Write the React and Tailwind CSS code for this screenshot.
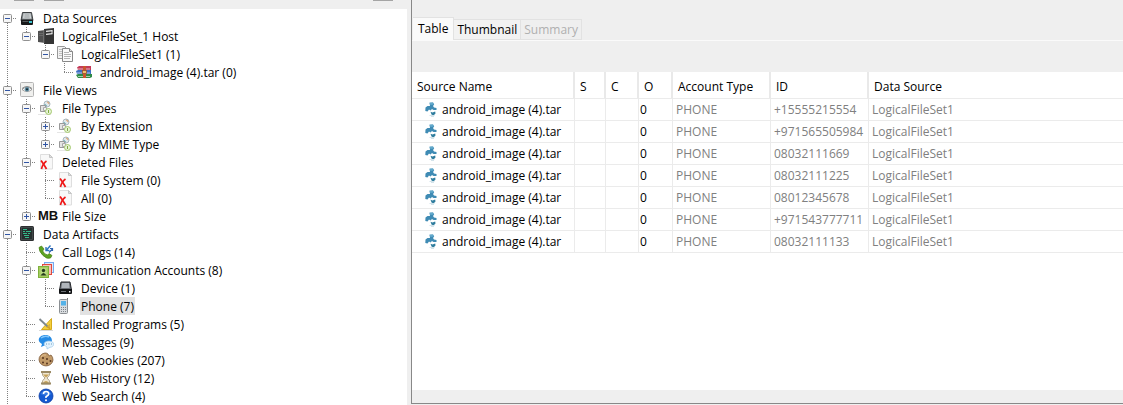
import { useState } from "react";

const ICONS = {
  drive: (
    <>
      <path d="M3.5 2.500h9l1.500 8H2z" fill="#8d9396" stroke="#3c3f41" />
      <path d="M4.500 3.500h7l.6 5H4z" fill="#d5d9da" />
      <path d="M5.500 5h5M5.300 7h5.400" stroke="#777c7f" strokeWidth=".7" />
      <path d="M2 9.500h12v4.500a1 1 0 0 1-1 1H3a1 1 0 0 1-1-1z" fill="#17191a" />
      <path d="M3.500 11.500h6" stroke="#55595b" />
      <rect x="10" y="11" width="3" height="2" fill="#3fc3cf" />
    </>
  ),
  device: (
    <>
      <path d="M4 2h9l1.500 8H2.500z" fill="#6a6e75" stroke="#25272b" />
      <path d="M5 3h7l.6 5H4.400z" fill="#b0b5bb" />
      <path d="M2 9h13v4a1 1 0 0 1-1 1H3a1 1 0 0 1-1-1z" fill="#111214" />
      <path d="M4 11.500h5" stroke="#6b6f74" />
      <rect x="12" y="11" width="1.500" height="1.500" fill="#e8eaec" />
    </>
  ),
  host: (
    <>
      <path d="M0 3l7-1v13l-7-1z" fill="#505050" />
      <path d="M1 5.500h4M1 7.500h4" stroke="#707070" strokeWidth=".8" />
      <path d="M6 1l10-1v16H6z" fill="#353535" />
      <path d="M5.800 2v13" stroke="#999" strokeWidth=".6" />
      <path d="M8 3.300l6.500-.6M8 6.300l6.500-.6" stroke="#ececec" strokeWidth="1.200" />
      <path d="M14 2.500v3" stroke="#ececec" />
    </>
  ),
  fileset: (
    <>
      <path d="M.5.5h7l2 2v10h-9z" fill="#f2f2f2" stroke="#999" />
      <path d="M2 3.500h4M2 5.500h4M2 7.500h3M2 9.500h3" stroke="#b3b3b3" strokeWidth=".8" />
      <path d="M5.500 2.500h7l3 3v10h-10z" fill="#fafafa" stroke="#888" />
      <path d="M12.500 2.500v3h3" fill="#ddd" stroke="#888" />
      <path d="M7 6.500h5M7 8.500h7M7 10.500h7M7 12.500h6" stroke="#aaa" strokeWidth=".9" />
    </>
  ),
  archive: (
    <>
      <path d="M1 3.500L3 2h12v4H2z" fill="#c43a58" />
      <path d="M1 5h13" stroke="#ecd3d8" strokeWidth=".8" />
      <path d="M0 7l2-1h13v4H1z" fill="#3f6fc4" />
      <path d="M1 9h13" stroke="#cfdcf2" strokeWidth=".8" />
      <path d="M0 11l2-1h14v3l-2 1H2z" fill="#2f8a47" />
      <path d="M2 12.500h12" stroke="#c4e5ca" strokeWidth=".8" />
      <path d="M7 2h3v12H7z" fill="#c9552f" />
      <rect x="6.500" y="6.500" width="4" height="3" fill="#efc46a" stroke="#9a5030" strokeWidth=".8" />
    </>
  ),
  views: (
    <>
      <rect x="1.500" y=".5" width="13" height="14" rx="1" fill="#f0f0ee" stroke="#b5b5b5" />
      <path d="M3 7.500Q8 3 13 7.500Q8 11.500 3 7.500" fill="#fff" stroke="#888" strokeWidth=".8" />
      <path d="M3 6.500Q8 2.500 13 6.500" fill="none" stroke="#888" />
      <circle cx="8" cy="7.300" r="2.300" fill="#5f8ea3" />
      <circle cx="8" cy="7.300" r="1.100" fill="#172a35" />
    </>
  ),
  types: (
    <>
      <path d="M0 14.500h13" stroke="#e5e5e5" />
      <circle cx="9" cy="4" r="3" fill="#e2e7e9" stroke="#a9b8bf" />
      <path d="M9 2a2 2 0 0 1 2 2" fill="none" stroke="#db9c65" />
      <path d="M7 4a2 2 0 0 0 2 2" fill="none" stroke="#59a8b4" />
      <path d="M2.500 5.500h5v6h-5z" fill="#e4e4e4" stroke="#999" />
      <path d="M5.500 7.500v3h3v-3z" fill="#f1f1f1" stroke="#aaa" />
      <circle cx="10.500" cy="11.500" r="3" fill="#e6f2d6" stroke="#a5ca70" />
      <path d="M10.500 10v3" stroke="#80ad42" />
    </>
  ),
  deleted: (
    <>
      <path d="M2.500.5h9l3 3v11.500H2.500z" fill="#f8f8f8" stroke="#dedede" />
      <path d="M11.500.5v3h3z" fill="#e1e1e1" stroke="#c5c5c5" />
      <path d="M3 6.500Q5 9 8.500 15" fill="none" stroke="#ee1515" strokeWidth="1.800" />
      <path d="M8.500 7Q4.500 10 3.500 15" fill="none" stroke="#ee1515" strokeWidth="1.600" />
    </>
  ),
  artifacts: (
    <>
      <rect x="1" y="0" width="14" height="15" rx="1.500" fill="#2d2f31" />
      <rect x="2.500" y="1.500" width="11" height="12" fill="#26302f" stroke="#4d5355" strokeWidth=".7" />
      <path d="M4 3.500h4M4 5.500h2M7 5.500h5M4 7.500h4M9 7.500h2M5 9.500h5M6 11.500h4" stroke="#36b98b" />
    </>
  ),
  calls: (
    <>
      <path d="M1 3.500L3.500 2L6 5L4.700 7Q6 10 9.500 11L11 9.500L14 11.500L12.500 14Q9 15.500 5 11.500T1 3.500" fill="#5da321" stroke="#427d12" strokeWidth=".7" />
      <path d="M12.500 1.500L8.500 6M8 3v3.500h3.500" fill="none" stroke="#2d75bd" strokeWidth="1.400" />
      <path d="M11 8.500L14.500 5M12 4.500h2.500V7" fill="none" stroke="#2a62b0" strokeWidth="1.200" />
    </>
  ),
  accounts: (
    <>
      <rect x="6.500" y=".5" width="9" height="10" fill="#dcecfc" stroke="#76aaf0" />
      <rect x="4.500" y="2.500" width="9" height="10" fill="#fbc4bd" stroke="#e2493d" />
      <rect x=".5" y="4.500" width="10" height="11" fill="#a5cd60" stroke="#7fb13c" />
      <rect x="2.500" y="6" width="6" height="7.500" fill="#b7d97f" />
      <circle cx="5.500" cy="8.500" r="1.700" fill="#243b1c" />
      <path d="M2.500 13.500q3-5 6 0z" fill="#243b1c" />
    </>
  ),
  phone: (
    <>
      <path d="M10.500 0v3" stroke="#777" />
      <rect x="2.500" y="1.500" width="8" height="14" rx="1" fill="#d9dcdf" stroke="#8b8f93" />
      <rect x="4" y="3" width="5" height="4.500" fill="#54b2e8" />
      <path d="M4 9.500h5M4 11.500h5M4 13.500h5" stroke="#7d848a" strokeDasharray="1 1" />
    </>
  ),
  programs: (
    <>
      <path d="M13.500 2.500v11H3.500z" fill="#f4cf3c" stroke="#d6ab1c" />
      <path d="M11.500 8.500v3H9z" fill="#fff" stroke="#c89d14" strokeWidth=".7" />
      <path d="M1.500 3l8 7.500" stroke="#7d878c" strokeWidth="1.800" />
      <path d="M9.500 10l2.500 3" stroke="#d0a02c" strokeWidth="1.500" />
      <path d="M1 14.500h14" stroke="#d9d9d9" />
    </>
  ),
  messages: (
    <>
      <path d="M7.500 1c8 0 9 10 0 10L3 13l1-3C-2 7 1 1 7.500 1" fill="#258be5" />
      <path d="M3 4q4-3 8-1" fill="none" stroke="#81c6fb" strokeWidth="1.500" />
      <path d="M11 7c6 0 6 6 1 6.300L9 15v-2C4 11 6 7 11 7" fill="#e4f3fd" stroke="#9dc9e8" strokeWidth=".7" />
      <path d="M8 10h6" stroke="#6399c0" strokeDasharray="1 1.500" />
    </>
  ),
  cookies: (
    <>
      <path d="M7 1q2 0 3 1l1 2 2-1q2 2 2 5a7 6.500 0 1 1-8-7" fill="#c19a68" stroke="#7d5836" strokeWidth=".8" />
      <path d="M3 5q2-3 5-2" fill="none" stroke="#e3c193" />
      <circle cx="5" cy="6" r="1" fill="#56351f" />
      <circle cx="9" cy="7" r="1" fill="#56351f" />
      <circle cx="5" cy="10.500" r="1" fill="#56351f" />
      <circle cx="9" cy="11.500" r="1" fill="#56351f" />
      <circle cx="12.500" cy="9" r="1" fill="#56351f" />
    </>
  ),
  history: (
    <>
      <path d="M4 2h8q0 4-3 6 3 2 3 6H4q0-4 3-6-3-2-3-6" fill="#efe6d0" stroke="#a39375" strokeWidth=".8" />
      <path d="M5 4.500h6L8 7.500zM5 13q3-4 6 0z" fill="#c7a258" />
      <path d="M3 2h10M3 13.500h10" stroke="#9c8a64" strokeWidth="1.800" />
    </>
  ),
  search: (
    <>
      <circle cx="8" cy="8" r="7" fill="#1459d1" stroke="#0b3ba3" strokeWidth=".8" />
      <path d="M2.500 6a6 5 0 0 1 11 0q-5 3-11 0" fill="#5a9bf3" opacity=".5" />
      <path d="M5.500 6q0-2.500 2.600-2.500T10.700 6Q10.700 7.200 8 8.700V10" fill="none" stroke="#fff" strokeWidth="1.600" />
      <circle cx="8" cy="12.200" r="1" fill="#fff" />
    </>
  ),
  account: (
    <>
      <path d="M5.500.8L9 .5l1.200 2L9 4l1 1.500 2.500.5v2H9.500L8 7 6.500 8.500 5 7.500 3.500 9.500 1.300 9 1.500 5.500 3.500 4H6z" fill="#3f8bb4" />
      <path d="M5.500.8L9 .5l.8 2L6.500 3z" fill="#63a9cb" />
      <path d="M6.500 9.800l2 .8 2.700-1.200.3 2-2 2-2-.8z" fill="#2f7d9e" />
      <path d="M5.500 13.500h5M7 14.500h3" stroke="#d3e3ea" />
    </>
  ),
};

function Icon({ name }) {
  if (name === "mb") {
    return (
      <span className="w-4 shrink-0 font-['Liberation_Sans',sans-serif] text-[13px] leading-4 font-bold text-[#111]">
        MB
      </span>
    );
  }
  return (
    <svg aria-hidden="true" viewBox="0 0 16 16" className="size-4 shrink-0">
      {ICONS[name]}
    </svg>
  );
}

const TREE = [
  {
    label: "Data Sources",
    icon: "drive",
    children: [
      {
        label: "LogicalFileSet_1 Host",
        icon: "host",
        children: [
          {
            label: "LogicalFileSet1 (1)",
            icon: "fileset",
            children: [{ label: "android_image (4).tar (0)", icon: "archive" }],
          },
        ],
      },
    ],
  },
  {
    label: "File Views",
    icon: "views",
    children: [
      {
        label: "File Types",
        icon: "types",
        children: [
          { label: "By Extension", icon: "types", children: [] },
          { label: "By MIME Type", icon: "types", children: [] },
        ],
      },
      {
        label: "Deleted Files",
        icon: "deleted",
        children: [
          { label: "File System (0)", icon: "deleted" },
          { label: "All (0)", icon: "deleted" },
        ],
      },
      { label: "File Size", icon: "mb", children: [] },
    ],
  },
  {
    label: "Data Artifacts",
    icon: "artifacts",
    continues: true,
    children: [
      { label: "Call Logs (14)", icon: "calls" },
      {
        label: "Communication Accounts (8)",
        icon: "accounts",
        children: [
          { label: "Device (1)", icon: "device" },
          { label: "Phone (7)", icon: "phone" },
        ],
      },
      { label: "Installed Programs (5)", icon: "programs" },
      { label: "Messages (9)", icon: "messages" },
      { label: "Web Cookies (207)", icon: "cookies" },
      { label: "Web History (12)", icon: "history" },
      { label: "Web Search (4)", icon: "search" },
    ],
  },
];

function Branch({ up, down, across }) {
  return (
    <svg aria-hidden="true" viewBox="0 0 19 18" className="h-[18px] w-[19px] shrink-0" stroke="#808080" strokeDasharray="1 1">
      {up && <path d="M7.500 0V9" />}
      {down && <path d="M7.500 10V18" />}
      {across && <path d="M7 9.500H17" />}
    </svg>
  );
}

function Expander({ label, open, onToggle, up, down }) {
  return (
    <button
      type="button"
      aria-label={`${open ? "Collapse" : "Expand"} ${label}`}
      onClick={onToggle}
      className="h-[18px] w-[19px] shrink-0"
    >
      <svg viewBox="0 0 19 18" className="h-[18px] w-[19px]">
        <g stroke="#808080" strokeDasharray="1 1">
          {up && <path d="M7.500 0V5" />}
          {down && <path d="M7.500 14V18" />}
          <path d="M13 9.500H17" />
        </g>
        <rect x="3.500" y="5.500" width="8" height="8" rx="1" fill="#f6f6f6" stroke="#919191" />
        <path d={open ? "M5 9.500h5" : "M5 9.500h5M7.500 7v5"} stroke="#3155a4" />
      </svg>
    </button>
  );
}

function TreeNode({ node, trail, first, last, selected, onSelect }) {
  const [open, setOpen] = useState(Boolean(node.children && node.children.length));
  const active = selected === node.label;
  return (
    <li role="treeitem" aria-selected={active} aria-expanded={node.children ? open : undefined}>
      <div className="flex h-[18px] items-center">
        {trail.map((line, i) => (
          <Branch key={i} up={line} down={line} />
        ))}
        {node.children ? (
          <Expander label={node.label} open={open} onToggle={() => setOpen(!open)} up={!first} down={!last} />
        ) : (
          <Branch up down={!last} across />
        )}
        <Icon name={node.icon} />
        <button
          type="button"
          onClick={() => onSelect(node.label)}
          className={`ml-[7px] h-[18px] px-px pt-px leading-[17px] whitespace-nowrap ${active ? "bg-[#e2e2e2]" : ""}`}
        >
          {node.label}
        </button>
      </div>
      {open && node.children.length > 0 && (
        <ul role="group">
          {node.children.map((child, i) => (
            <TreeNode
              key={child.label}
              node={child}
              trail={[...trail, !last]}
              last={i === node.children.length - 1}
              selected={selected}
              onSelect={onSelect}
            />
          ))}
        </ul>
      )}
    </li>
  );
}

const COLUMNS = ["Source Name", "S", "C", "O", "Account Type", "ID", "Data Source"];
const IDS = ["+15555215554", "+971565505984", "08032111669", "08032111225", "08012345678", "+971543777711", "08032111133"];

function ResultsTable() {
  return (
    <table className="w-full table-fixed border-separate border-spacing-0 text-left">
      <colgroup>
        <col className="w-[163px]" />
        <col className="w-[31px]" />
        <col className="w-[33px]" />
        <col className="w-[34px]" />
        <col className="w-[98px]" />
        <col className="w-[98px]" />
        <col />
      </colgroup>
      <thead>
        <tr className="h-[27px]">
          {COLUMNS.map((name) => (
            <th
              key={name}
              className="border-r-2 border-b border-r-[#e9e9e9] border-b-[#ebebeb] p-0 pt-1 pl-[5px] leading-4 font-normal whitespace-nowrap last:border-r-0"
            >
              {name}
            </th>
          ))}
        </tr>
      </thead>
      <tbody className="[&_td]:h-[22px] [&_td]:border-r [&_td]:border-b [&_td]:border-[#ebebeb] [&_td]:p-0 [&_td]:leading-4 [&_td]:whitespace-nowrap [&_td:last-child]:border-r-0">
        {IDS.map((id) => (
          <tr key={id}>
            <td>
              <div className="flex items-center gap-0.5 pl-3">
                <Icon name="account" />
                <span>android_image (4).tar</span>
              </div>
            </td>
            <td />
            <td />
            <td>
              <span className="pl-px">0</span>
            </td>
            <td className="text-[#808080]">
              <span className="pl-[3px]">PHONE</span>
            </td>
            <td className="text-[#808080]">
              <span className="pl-[3px]">{id}</span>
            </td>
            <td className="text-[#808080]">
              <span className="pl-[3px]">LogicalFileSet1</span>
            </td>
          </tr>
        ))}
      </tbody>
    </table>
  );
}

export default function App() {
  const [selected, setSelected] = useState("Phone (7)");
  return (
    <div className="flex h-screen overflow-hidden bg-[#efefef] font-['Open_Sans','Noto_Sans',sans-serif] text-[12px] text-black">
      <aside className="flex w-[407px] shrink-0 flex-col">
        <div className="flex h-[9px] items-start gap-2.5 pr-3.5 pl-3.5">
          <span className="h-px w-5 bg-[#a5a5a5]" />
          <span className="h-px w-5 bg-[#a5a5a5]" />
          <span className="ml-auto h-px w-5 bg-[#a5a5a5]" />
        </div>
        <ul role="tree" aria-label="Case contents" className="grow overflow-hidden bg-white">
          {TREE.map((node, i) => (
            <TreeNode
              key={node.label}
              node={node}
              trail={[]}
              first={i === 0}
              last={i === TREE.length - 1 && !node.continues}
              selected={selected}
              onSelect={setSelected}
            />
          ))}
        </ul>
      </aside>
      <main className="mb-px ml-1 flex min-w-0 grow flex-col border-b border-l border-[#888]">
        <div role="tablist" className="flex h-[41px] items-end border-b border-[#fafafa] pl-px">
          <button type="button" role="tab" aria-selected="true" className="h-[23px] border-t border-r border-[#e2e2e2] bg-[#fafafa] px-[5px] leading-[22px]">
            Table
          </button>
          <button type="button" role="tab" aria-selected="false" className="h-[21px] border border-l-0 border-[#e2e2e2] bg-[#f2f2f2] px-[3px] pt-px leading-[18px]">
            Thumbnail
          </button>
          <button type="button" role="tab" aria-selected="false" disabled className="h-[21px] border border-l-0 border-[#e2e2e2] px-[3px] leading-[19px] text-[#b0b0b0]">
            Summary
          </button>
        </div>
        <div className="mt-[31px] mb-[13px] grow overflow-hidden bg-white">
          <ResultsTable />
        </div>
      </main>
    </div>
  );
}
